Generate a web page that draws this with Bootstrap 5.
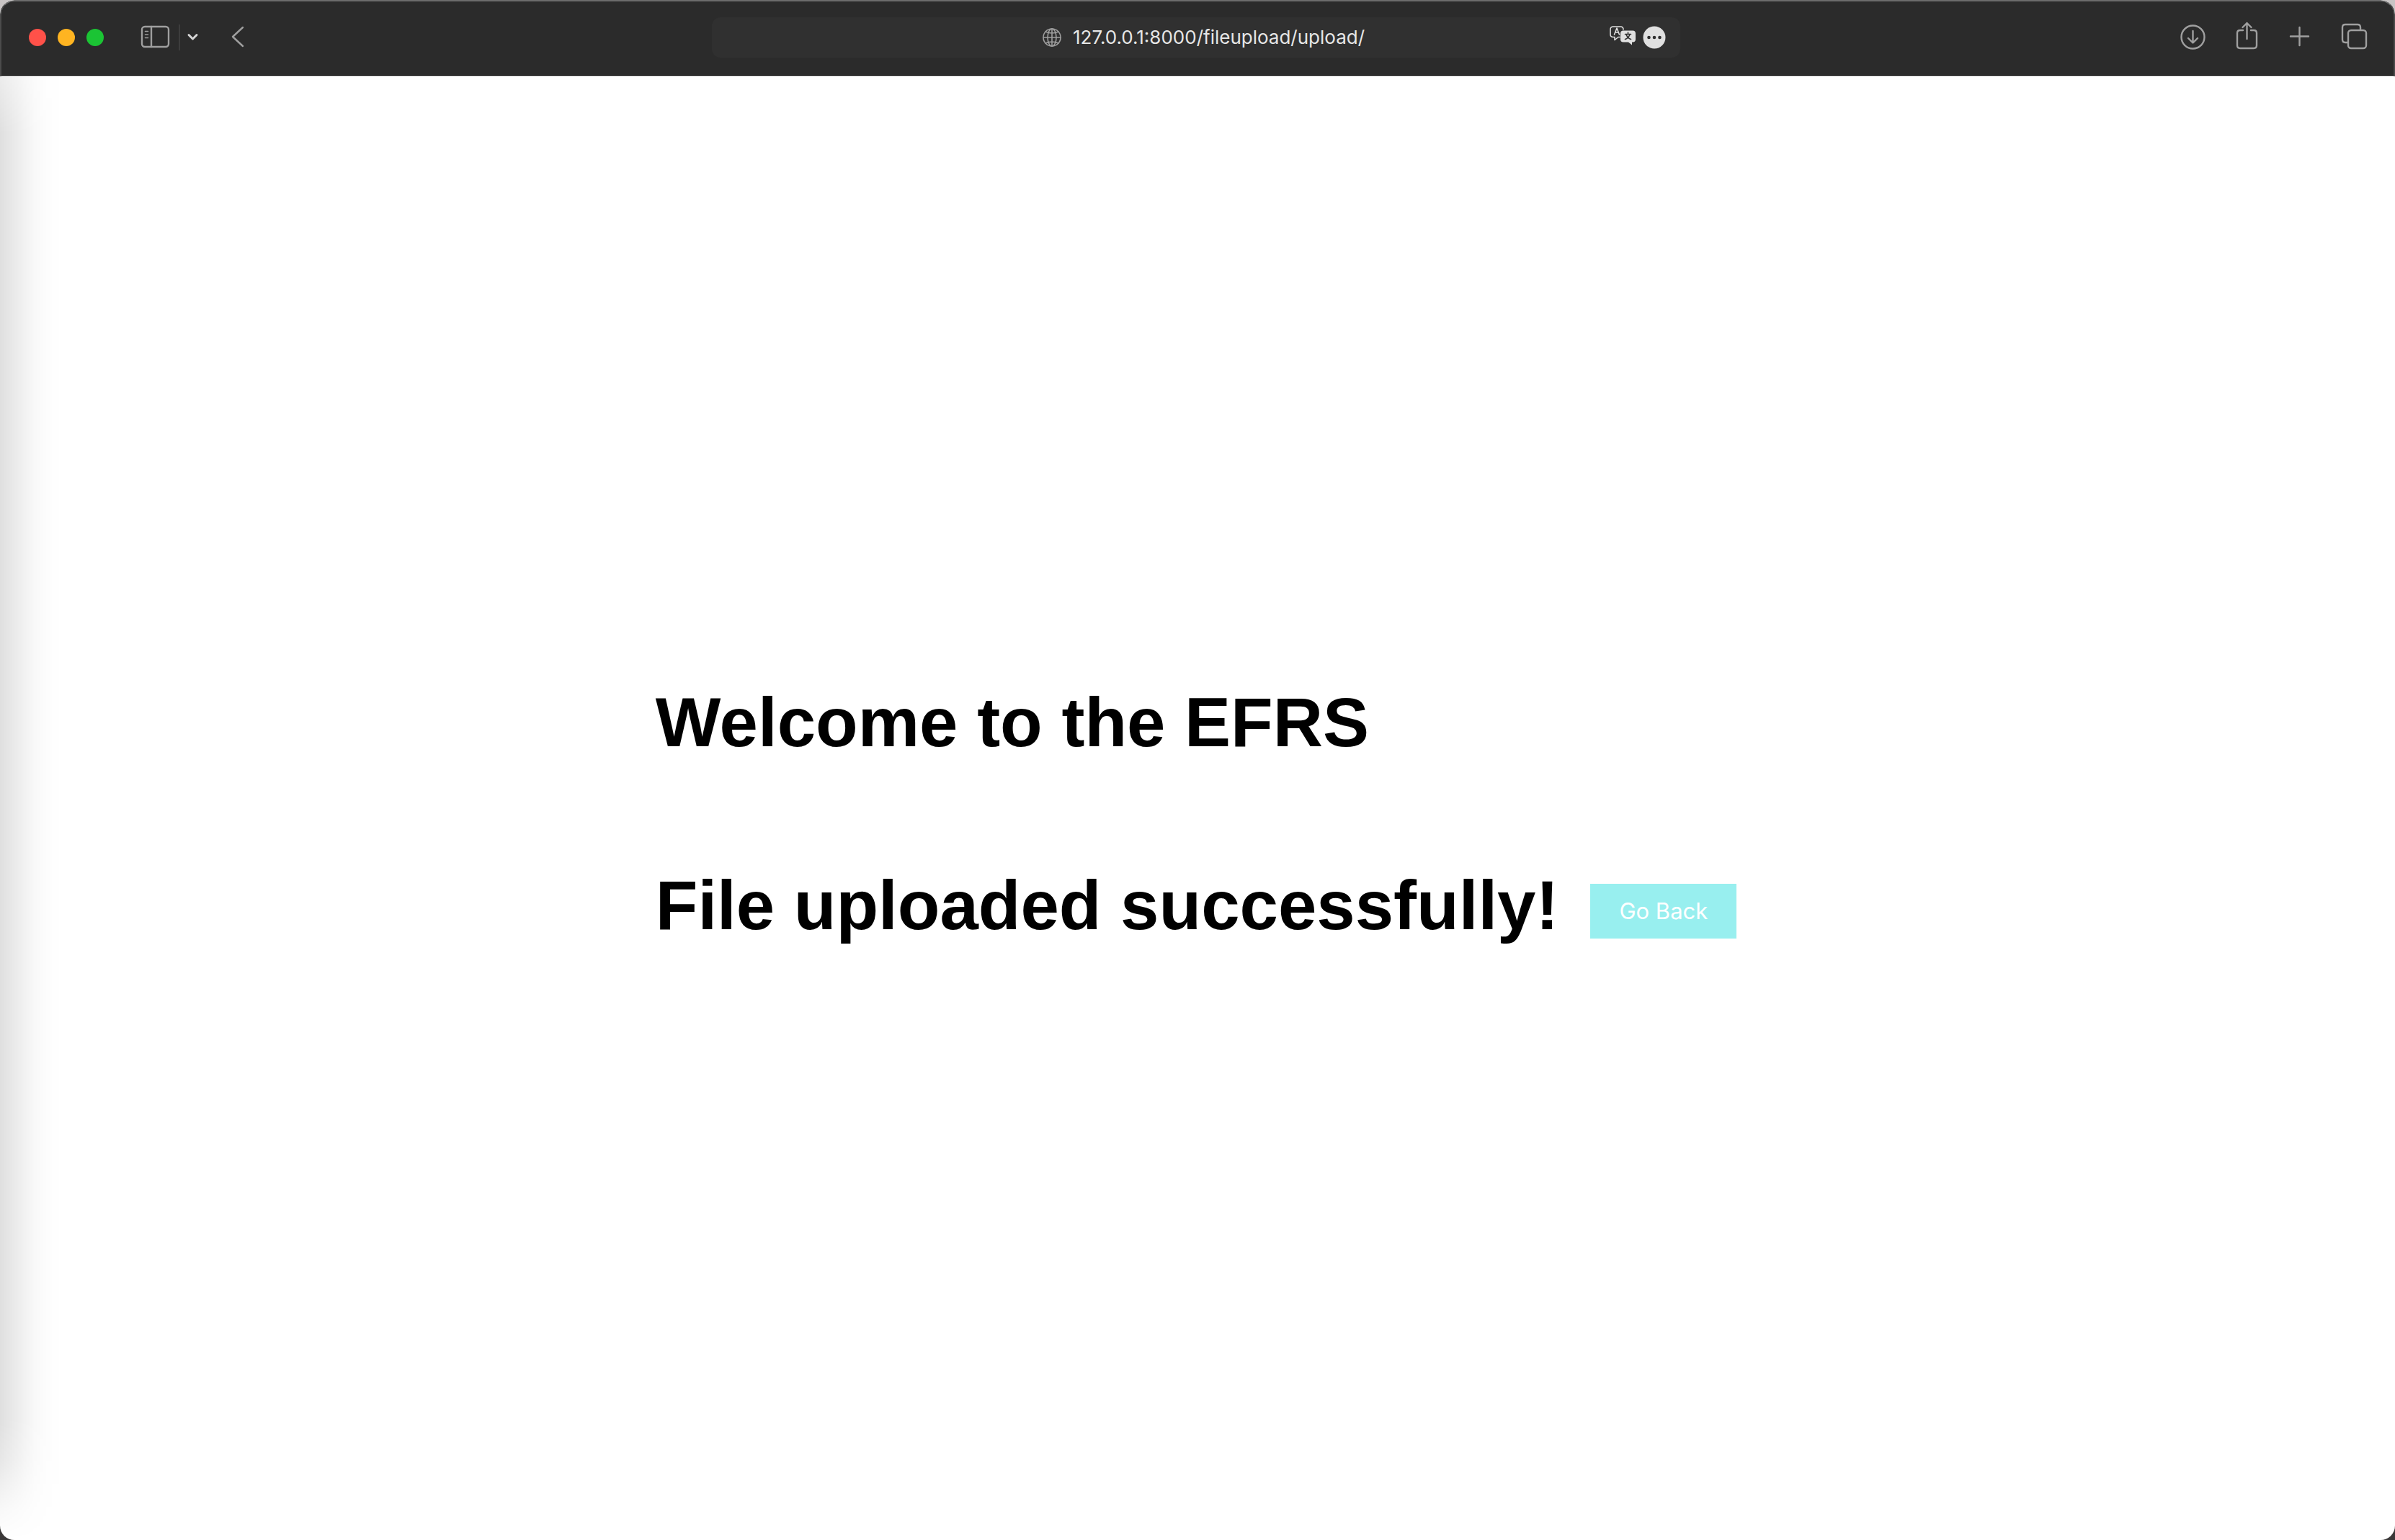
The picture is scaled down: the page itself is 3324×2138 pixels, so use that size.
<!DOCTYPE html>
<html lang="en">
<head>
<meta charset="utf-8">
<meta name="viewport" content="width=device-width, initial-scale=1">
<title>EFRS</title>
<link href="https://cdn.jsdelivr.net/npm/bootstrap@5.3.0/dist/css/bootstrap.min.css" rel="stylesheet">
<style>
body { background: linear-gradient(#c8c4c4 50%, #3a3838 50%); font-family: Inter, Roboto, sans-serif; }
.browser { border-radius: 20px; background: #fff; }
.toolbar {
  display: grid; grid-template-columns: 1fr minmax(0, 1344px) 1fr; align-items: center;
  height: 106px; padding: 0 34px 4px 30px; background: #2b2b2b; color: #9f9f9f;
  border: 2px solid #4c4c4c; border-top-color: #6c6c6c; border-bottom: 0;
  border-radius: 20px 20px 0 0; box-shadow: inset 0 -1px #bdbdbd, inset 0 -2px #000;
}
.toolbar svg { display: block; fill: none; stroke: currentColor; stroke-width: 2.4; stroke-linecap: round; stroke-linejoin: round; }
.toolbar .fine { stroke-width: 1.6; }
.tool { padding: 0; border: 0; background: none; color: inherit; }
.dot { width: 24px; height: 24px; padding: 0; border: 0; border-radius: 50%; }
.dot-close { background: #ff5149; }
.dot-min { background: #ffb421; }
.dot-max { background: #1bc434; }
.split { width: 2px; height: 36px; margin: 0 14px; background: #3d3d3d; }
.address { height: 56px; border-radius: 12px; background: #303030; }
.address input { width: 408px; padding: 0; border: 0; background: none; color: #e6e6e6; font-size: 26px; line-height: 32px; }
.lights { margin: 0 54px 0 8px; }
.page-tools { right: 20px; gap: 10px; color: #e0e0e0; }
.page-area { padding-top: 16px; }
.page-area::before {
  content: ""; position: absolute; left: 0; top: 0; bottom: 0; width: 88px; pointer-events: none;
  background: linear-gradient(90deg, rgba(0,0,0,.125), rgba(0,0,0,.08) 25%, rgba(0,0,0,.022) 55%, rgba(0,0,0,.008) 75%, transparent);
  -webkit-mask-image: linear-gradient(rgba(0,0,0,.6), #000 80px, #000 calc(100% - 170px), rgba(0,0,0,.75) calc(100% - 110px), rgba(0,0,0,.2) calc(100% - 40px), transparent);
}
.message { gap: 144px; }
.message h1 { margin: 0; font: bold 96px/110px "Liberation Sans", Arial, sans-serif; color: #000; }
.status-row { column-gap: 44px; }
.go-back { margin: 16px 4px 0 0; padding: 18px 40px; border: 0; border-radius: 0; background: #98efef; color: #fff; font-size: 31px; line-height: 40px; }
.go-back:hover { background: #7fe5e5; color: #fff; }
</style>
<script src="https://cdn.jsdelivr.net/npm/bootstrap@5.3.0/dist/js/bootstrap.bundle.min.js"></script>
</head>
<body>
<div class="browser min-vh-100 d-flex flex-column overflow-hidden">
  <header class="toolbar">
    <div class="d-flex align-items-center">
      <div class="lights d-flex gap-3">
        <button class="dot dot-close" type="button" aria-label="Close"></button>
        <button class="dot dot-min" type="button" aria-label="Minimize"></button>
        <button class="dot dot-max" type="button" aria-label="Full screen"></button>
      </div>
      <button class="tool" type="button" aria-label="Sidebar">
        <svg width="36" height="36" viewBox="198 34 36 36" overflow="visible"><rect x="197" y="37" width="37" height="28" rx="4"/><path d="M210 37v28"/><path class="fine" d="M201.500 43.500h4M201.500 48h4M201.500 52.500h4"/></svg>
      </button>
      <div class="split"></div>
      <button class="tool" type="button" aria-label="Tab groups">
        <svg width="20" height="36" viewBox="265 34 20 36" overflow="visible"><path d="M263 48.500l5.500 5.500 5.500-5.500" stroke="#d6d6d6" stroke-width="3"/></svg>
      </button>
      <button class="tool ms-5" type="button" aria-label="Back">
        <svg width="20" height="36" viewBox="332 34 20 36" overflow="visible"><path d="M337 38l-14 13 14 13"/></svg>
      </button>
    </div>
    <div class="address d-flex align-items-center justify-content-center position-relative">
      <label class="d-flex align-items-center gap-3 ps-4">
        <svg width="26" height="26" viewBox="0 0 26 26"><g class="fine"><circle cx="13" cy="13" r="12"/><ellipse cx="13" cy="13" rx="6" ry="12"/><path d="M13 1v24M1 13h24M4 5q9 4 18 0M4 21q9-4 18 0"/></g></svg>
        <input type="text" aria-label="Address" value="127.0.0.1:8000/fileupload/upload/">
      </label>
      <div class="page-tools position-absolute d-flex align-items-center">
        <button class="tool" type="button" aria-label="Translate">
          <svg width="36" height="32" viewBox="0 2 36 32"><g class="fine"><path d="M14 17.500h-2l-5 4v-4H5q-4 0-4-4V7q0-4 4-4h10q4 0 4 4"/><path d="M6.500 14L10 5l3.500 9M7.700 11h4.600"/></g><path d="M19 8.500h13q4 0 4 4v8q0 4-4 4h-1v4l-5-4h-7q-4 0-4-4v-8q0-4 4-4z" fill="#e0e0e0" stroke="none"/><path class="fine" d="M25.500 11v2M21.500 13.500h8M23 14q2 5 6.500 6.500M28 14q-2 5-6.500 6.500" stroke="#303030"/></svg>
        </button>
        <button class="tool" type="button" aria-label="Page menu">
          <svg width="32" height="32" viewBox="0 0 32 32"><circle cx="16" cy="16" r="15.500" fill="#e0e0e0" stroke="none"/><g fill="#303030" stroke="none"><circle cx="8.500" cy="16" r="2.300"/><circle cx="16" cy="16" r="2.300"/><circle cx="23.500" cy="16" r="2.300"/></g></svg>
        </button>
      </div>
    </div>
    <div class="d-flex align-items-center justify-content-end">
      <button class="tool" type="button" aria-label="Downloads">
        <svg width="76" height="40" viewBox="3006 32 76 40"><circle cx="3043.500" cy="51.500" r="16"/><path d="M3043.500 43v16M3037 53l6.500 6.500 6.500-6.500"/></svg>
      </button>
      <button class="tool" type="button" aria-label="Share">
        <svg width="72" height="40" viewBox="3082 32 72 40" overflow="visible"><path d="M3113 42h-4q-4 0-4 4v17q0 4 4 4h19q4 0 4-4V46q0-4-4-4h-4M3118.500 54V32M3112.500 38l6-6 6 6"/></svg>
      </button>
      <button class="tool" type="button" aria-label="New tab">
        <svg width="76" height="40" viewBox="3154 32 76 40"><path d="M3191.500 38v25M3179 50.500h25"/></svg>
      </button>
      <button class="tool" type="button" aria-label="Tab overview">
        <svg width="58" height="40" viewBox="3230 32 58 40"><rect x="3259" y="42" width="25" height="25" rx="4"/><path d="M3258 59h-3q-4 0-4-4V38q0-4 4-4h17q4 0 4 4v3"/></svg>
      </button>
    </div>
  </header>
  <main class="page-area position-relative flex-grow-1 d-flex align-items-center justify-content-center">
    <div class="message d-flex flex-column">
      <h1>Welcome to the EFRS</h1>
      <div class="status-row d-flex align-items-center flex-wrap">
        <h1>File uploaded successfully!</h1>
        <button class="go-back btn" type="button">Go Back</button>
      </div>
    </div>
  </main>
</div>
</body>
</html>
